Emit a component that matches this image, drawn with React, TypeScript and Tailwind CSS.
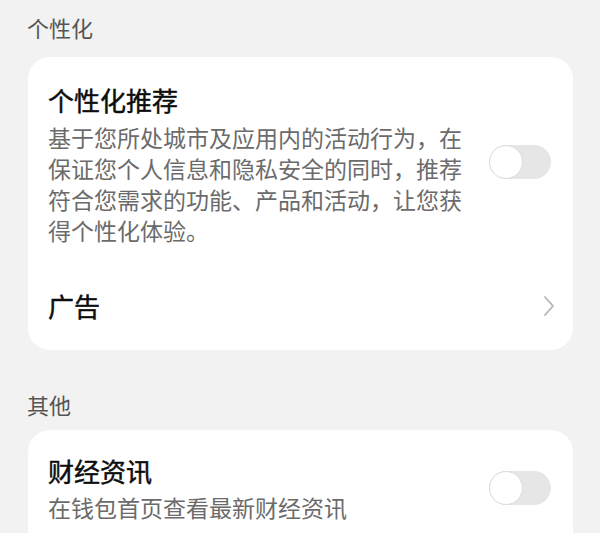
import React, { useState } from "react";

const FONT = { fontFamily: '"Noto Sans CJK SC", "Noto Sans", sans-serif' };

function Toggle({ on, onChange }: { on: boolean; onChange: () => void }) {
  return (
    <button
      onClick={onChange}
      className={`relative shrink-0 w-[62px] h-[34px] rounded-full transition ${
        on ? "bg-[#3b82f6]" : "bg-[#e6e6e6]"
      }`}
    >
      <span
        className={`absolute top-0 w-[34px] h-[34px] rounded-full bg-white border border-[#dcdcdc] transition ${
          on ? "left-[28px]" : "left-0"
        }`}
      />
    </button>
  );
}

function Chevron() {
  return (
    <svg width="12" height="22" viewBox="0 0 12 22" fill="none" className="shrink-0">
      <path d="M2 2 L10 11 L2 20" stroke="#b4b4b4" strokeWidth="1.8" strokeLinecap="round" strokeLinejoin="round" />
    </svg>
  );
}

export default function App() {
  const [personal, setPersonal] = useState(false);
  const [finance, setFinance] = useState(false);

  return (
    <div className="h-[533px] bg-[#f2f2f2] px-[28px] pt-[12px] overflow-hidden" style={FONT}>
      {/* 个性化 */}
      <div className="text-[22px] leading-[30px] text-[#555555] -ml-px">个性化</div>
      <div className="mt-[15px] w-[545px] bg-white rounded-[22px]">
        <div className="flex items-start justify-between pl-[20px] pr-[22px] pt-[25px] pb-[16px]">
          <div className="w-[418px]">
            <div className="text-[26px] leading-[36px] text-[#0d0d0d] [-webkit-text-stroke:0.45px_#0d0d0d]">个性化推荐</div>
            <p className="mt-[4px] text-[23px] leading-[31px] text-[#6b6b6b]">
              基于您所处城市及应用内的活动行为，在保证您个人信息和隐私安全的同时，推荐符合您需求的功能、产品和活动，让您获得个性化体验。
            </p>
          </div>
          <div className="mt-[63px]">
            <Toggle on={personal} onChange={() => setPersonal(!personal)} />
          </div>
        </div>
        <div className="flex items-center justify-between h-[88px] pl-[20px] pr-[18px]">
          <span className="text-[26px] leading-[36px] text-[#0d0d0d] [-webkit-text-stroke:0.45px_#0d0d0d]">广告</span>
          <Chevron />
        </div>
      </div>

      {/* 其他 */}
      <div className="mt-[39px] text-[22px] leading-[30px] text-[#555555] -ml-px">其他</div>
      <div className="mt-[11px] w-[545px] bg-white rounded-[22px] h-[140px]">
        <div className="flex items-center justify-between pl-[20px] pr-[22px] pt-[23px]">
          <div>
            <div className="text-[26px] leading-[36px] text-[#0d0d0d] [-webkit-text-stroke:0.45px_#0d0d0d]">财经资讯</div>
            <p className="mt-[3px] text-[23px] leading-[31px] text-[#6b6b6b]">在钱包首页查看最新财经资讯</p>
          </div>
          <Toggle on={finance} onChange={() => setFinance(!finance)} />
        </div>
      </div>
    </div>
  );
}
